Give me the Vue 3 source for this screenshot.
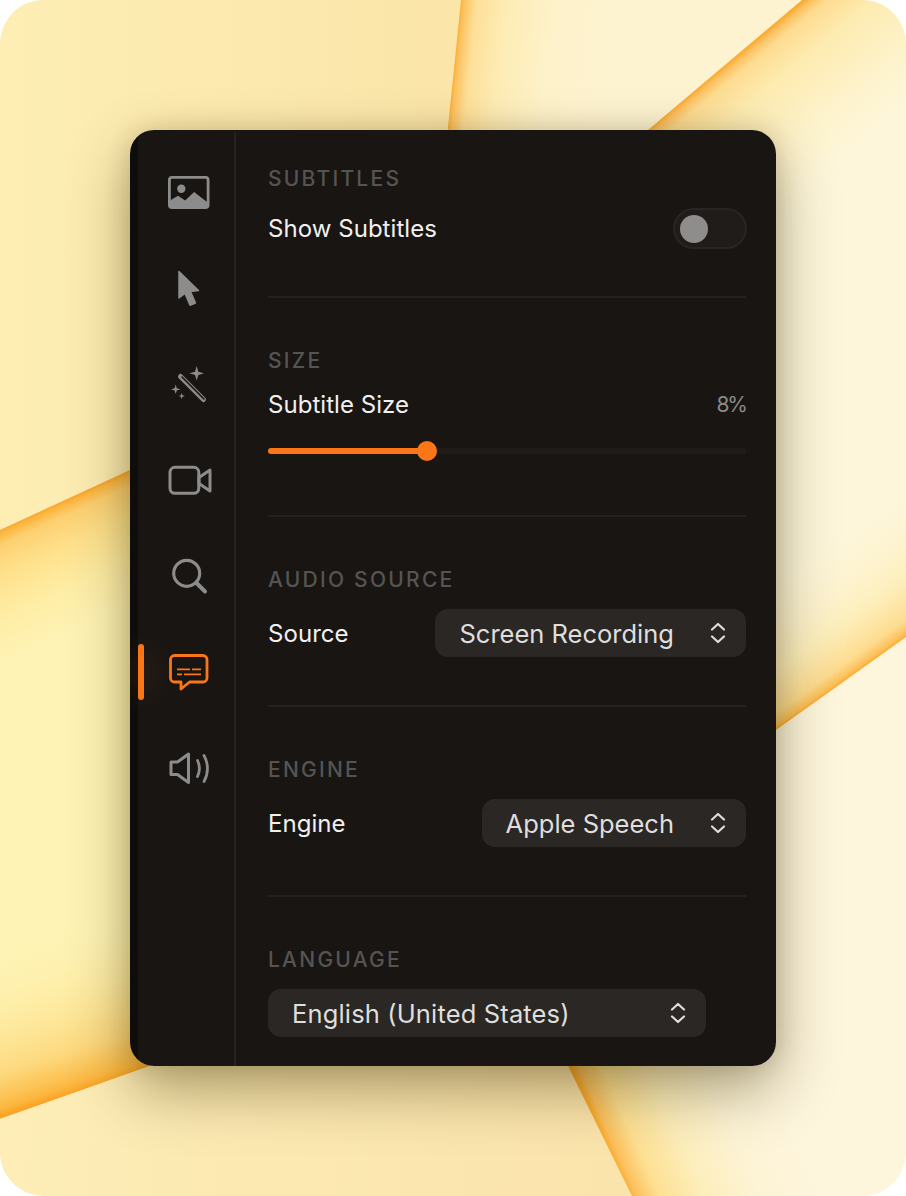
<script setup>
import { ref } from 'vue'

const showSubtitles = ref(false)
const subtitleSize = ref(8)
const sliderPercent = 33.2
</script>

<template>
  <div class="stage">
    <svg class="wallpaper" viewBox="0 0 906 1196" preserveAspectRatio="none">
      <defs>
        <linearGradient id="tl" gradientUnits="userSpaceOnUse" x1="0" y1="200" x2="460" y2="200">
          <stop offset="0" stop-color="#fdeeb4" />
          <stop offset="1" stop-color="#fbe5a8" />
        </linearGradient>
        <linearGradient id="e1" gradientUnits="userSpaceOnUse" x1="454" y1="64" x2="612" y2="80">
          <stop offset="0" stop-color="#fbaa2a" />
          <stop offset="0.02" stop-color="#fcc05a" />
          <stop offset="0.1" stop-color="#fddf98" />
          <stop offset="0.28" stop-color="#fdecb4" />
          <stop offset="0.6" stop-color="#fdf2ca" />
          <stop offset="1" stop-color="#fdf3d0" />
        </linearGradient>
        <linearGradient id="e2" gradientUnits="userSpaceOnUse" x1="726" y1="65" x2="820" y2="178">
          <stop offset="0" stop-color="#fbab30" />
          <stop offset="0.03" stop-color="#fcc060" />
          <stop offset="0.1" stop-color="#fddc90" />
          <stop offset="0.3" stop-color="#fdebb0" />
          <stop offset="0.7" stop-color="#fdf3cc" />
          <stop offset="1" stop-color="#fdf6da" />
        </linearGradient>
        <linearGradient id="e5" gradientUnits="userSpaceOnUse" x1="841" y1="684" x2="771" y2="586">
          <stop offset="0" stop-color="#fba92a" stop-opacity="1" />
          <stop offset="0.03" stop-color="#fcbf58" stop-opacity="1" />
          <stop offset="0.12" stop-color="#fddc90" stop-opacity="1" />
          <stop offset="0.4" stop-color="#fdeeb8" stop-opacity="0.9" />
          <stop offset="1" stop-color="#fdf3d0" stop-opacity="0" />
        </linearGradient>
        <linearGradient id="e3" gradientUnits="userSpaceOnUse" x1="65" y1="500" x2="115" y2="610">
          <stop offset="0" stop-color="#fba52a" />
          <stop offset="0.03" stop-color="#fcb640" />
          <stop offset="0.12" stop-color="#fdd070" />
          <stop offset="0.33" stop-color="#fee08a" />
          <stop offset="0.66" stop-color="#feeda4" />
          <stop offset="1" stop-color="#fef3b4" />
        </linearGradient>
        <linearGradient id="e4" gradientUnits="userSpaceOnUse" x1="75" y1="1092" x2="25" y2="940">
          <stop offset="0" stop-color="#fba425" stop-opacity="1" />
          <stop offset="0.05" stop-color="#fcb840" stop-opacity="1" />
          <stop offset="0.25" stop-color="#fdd678" stop-opacity="0.9" />
          <stop offset="0.6" stop-color="#fee89a" stop-opacity="0.6" />
          <stop offset="1" stop-color="#fef3b4" stop-opacity="0" />
        </linearGradient>
        <linearGradient id="bot" gradientUnits="userSpaceOnUse" x1="0" y1="1120" x2="620" y2="1180">
          <stop offset="0" stop-color="#fdedb6" />
          <stop offset="1" stop-color="#fbe3ac" />
        </linearGradient>
        <linearGradient id="e6" gradientUnits="userSpaceOnUse" x1="600" y1="1131" x2="760" y2="1060">
          <stop offset="0" stop-color="#fba828" />
          <stop offset="0.04" stop-color="#fcc05c" />
          <stop offset="0.16" stop-color="#fde092" />
          <stop offset="0.4" stop-color="#fdeebc" />
          <stop offset="0.7" stop-color="#fdf4d6" />
          <stop offset="1" stop-color="#fdf5dc" />
        </linearGradient>
      </defs>
      <rect width="906" height="1196" fill="#fdf5dc" />
      <polygon points="0,0 461,0 440,200 440,560 0,530" fill="url(#tl)" />
      <polygon points="461,0 802,0 560,204 440,204" fill="url(#e1)" />
      <polygon points="802,0 906,0 906,637 776,730 500,300 648,130" fill="url(#e2)" />
      <polygon points="906,637 776,730 640,560 906,300" fill="url(#e5)" />
      <polygon points="0,530 130,470 300,400 300,1066 150,1066 0,1119" fill="url(#e3)" />
      <polygon points="0,1119 150,1066 300,1000 300,800 0,800" fill="url(#e4)" />
      <polygon points="0,1119 150,1066 568,1066 632,1196 0,1196" fill="url(#bot)" />
      <polygon points="568,1066 800,1000 906,1196 632,1196" fill="url(#e6)" />
    </svg>

    <div class="panel">
      <nav class="sidebar">
        <button class="nav-btn">
          <svg class="nav-icon" viewBox="168 170 44 44">
            <path fill="#8c8c8c" fill-rule="evenodd" d="M172 176h33.500a4 4 0 0 1 4 4v25a4 4 0 0 1-4 4H172a4 4 0 0 1-4-4v-25a4 4 0 0 1 4-4zm0 2.800a1.200 1.200 0 0 0-1.200 1.200v20l7.200-4.200 7.200 4.600 8.900-8.400 12.600 9.800V180a1.200 1.200 0 0 0-1.200-1.200z" />
            <circle cx="181.300" cy="188.700" r="4.200" fill="#8c8c8c" />
          </svg>
        </button>
        <button class="nav-btn">
          <svg class="nav-icon" viewBox="168 266 44 44">
            <path fill="#8c8c8c" stroke="#8c8c8c" stroke-width="1.500" stroke-linejoin="round" d="M179 271.500 198.500 290.500 190.500 291.500 195.500 303 190 305.300 185 293.500 179 298z" />
          </svg>
        </button>
        <button class="nav-btn">
          <svg class="nav-icon" viewBox="168 362 44 44">
            <path d="M180.500 376.500 203.500 399.500" stroke="#8c8c8c" stroke-width="5" stroke-linecap="round" fill="none" />
            <path d="M182 377 204 399" stroke="#181513" stroke-width="1.600" stroke-linecap="round" fill="none" />
            <path fill="#8c8c8c" d="M196.700 366 198.300 371.700 204 373.300 198.300 375 196.700 380.600 195 375 189.400 373.300 195 371.700zM175.700 384.500 176.800 388.200 180.500 389.300 176.800 390.400 175.700 394 174.600 390.400 171 389.300 174.600 388.200zM181.700 392.800 182.500 395.200 184.900 396 182.500 396.800 181.700 399.200 180.900 396.800 178.500 396 180.900 395.200z" />
          </svg>
        </button>
        <button class="nav-btn">
          <svg class="nav-icon" viewBox="168 458 44 44" fill="none" stroke="#8c8c8c" stroke-width="3" stroke-linejoin="round">
            <rect x="170" y="467.300" width="28.800" height="26" rx="5" />
            <path d="M199 477.500 210 470v21l-11-7.500z" />
          </svg>
        </button>
        <button class="nav-btn">
          <svg class="nav-icon" viewBox="168 554 44 44" fill="none" stroke="#8c8c8c" stroke-linecap="round">
            <circle cx="186.700" cy="573.300" r="13" stroke-width="3.200" />
            <path d="M196.500 583 205 591.500" stroke-width="4" />
          </svg>
        </button>
        <button class="nav-btn active">
          <svg class="nav-icon" viewBox="168 650 44 44" fill="none" stroke="#fb7616" stroke-linejoin="round">
            <path stroke-width="2.800" d="M174.500 655.500h28.500a4 4 0 0 1 4 4v18.500a4 4 0 0 1-4 4h-13.500l-8.500 7v-7h-6.500a4 4 0 0 1-4-4v-18.500a4 4 0 0 1 4-4z" />
            <path stroke-width="1.800" d="M177 669.300h13M192 669.300h9M177 674.300h5M184 674.300h17" />
          </svg>
        </button>
        <button class="nav-btn">
          <svg class="nav-icon" viewBox="168 746 44 44" fill="none" stroke="#8c8c8c" stroke-width="2.800" stroke-linejoin="round" stroke-linecap="round">
            <path stroke-width="3" d="M171 762h6.500l11-8v28.500l-11-8H171z" />
            <path d="M197.500 760.500c2.400 5 2.400 11 0 16M204 755.500c4.600 8 4.600 18 0 26" />
          </svg>
        </button>
      </nav>

      <main class="content">
        <section class="group">
          <h2 class="group-title">SUBTITLES</h2>
          <div class="row">
            <span class="row-label">Show Subtitles</span>
            <button class="toggle" :class="{ on: showSubtitles }" @click="showSubtitles = !showSubtitles">
              <span class="knob"></span>
            </button>
          </div>
        </section>

        <section class="group">
          <h2 class="group-title">SIZE</h2>
          <div class="row row-tight">
            <span class="row-label">Subtitle Size</span>
            <span class="row-value">{{ subtitleSize }}%</span>
          </div>
          <div class="slider">
            <div class="slider-fill" :style="{ width: sliderPercent + '%' }"></div>
            <span class="slider-thumb" :style="{ left: sliderPercent + '%' }"></span>
          </div>
        </section>

        <section class="group">
          <h2 class="group-title">AUDIO SOURCE</h2>
          <div class="row">
            <span class="row-label">Source</span>
            <div class="select">
              <span>Screen Recording</span>
              <svg class="updown" viewBox="0 0 16 22" fill="none" stroke="currentColor" stroke-width="2.200" stroke-linecap="round" stroke-linejoin="round">
                <path d="M2 7.500 8 2l6 5.500M2 14.500 8 20l6-5.500" />
              </svg>
            </div>
          </div>
        </section>

        <section class="group">
          <h2 class="group-title">ENGINE</h2>
          <div class="row">
            <span class="row-label">Engine</span>
            <div class="select">
              <span>Apple Speech</span>
              <svg class="updown" viewBox="0 0 16 22" fill="none" stroke="currentColor" stroke-width="2.200" stroke-linecap="round" stroke-linejoin="round">
                <path d="M2 7.500 8 2l6 5.500M2 14.500 8 20l6-5.500" />
              </svg>
            </div>
          </div>
        </section>

        <section class="group last">
          <h2 class="group-title">LANGUAGE</h2>
          <div class="select select-wide">
            <span>English (United States)</span>
            <svg class="updown" viewBox="0 0 16 22" fill="none" stroke="currentColor" stroke-width="2.200" stroke-linecap="round" stroke-linejoin="round">
              <path d="M2 7.500 8 2l6 5.500M2 14.500 8 20l6-5.500" />
            </svg>
          </div>
        </section>
      </main>
    </div>
  </div>
</template>

<style>
html, body {
  margin: 0;
  background: #fff;
}
</style>

<style scoped>
.stage {
  position: relative;
  width: 906px;
  height: 1196px;
  box-sizing: border-box;
  padding: 130px;
  border-radius: 44px;
  overflow: hidden;
  font-family: Inter, "Liberation Sans", sans-serif;
}

.wallpaper {
  position: absolute;
  inset: 0;
  width: 100%;
  height: 100%;
}

.panel {
  position: relative;
  display: flex;
  height: 936px;
  border-radius: 24px;
  overflow: hidden;
  background: linear-gradient(90deg, #0f0d0c 8px, #181513 8px);
  box-shadow: 0 24px 60px rgba(60, 45, 0, 0.42), 0 0 24px rgba(60, 45, 0, 0.16);
}

.sidebar {
  width: 98px;
  flex-shrink: 0;
  display: flex;
  flex-direction: column;
  box-sizing: border-box;
  margin: 2px 0 0 8px;
  padding-top: 12px;
  border-right: 2px solid #252220;
}

.nav-btn {
  position: relative;
  display: flex;
  align-items: center;
  justify-content: center;
  height: 96px;
  padding: 0 0 0 8px;
  border: none;
  background: none;
}

.nav-icon {
  width: 44px;
  height: 44px;
}

.nav-btn.active::before {
  content: "";
  position: absolute;
  left: 0;
  top: 20px;
  width: 6px;
  height: 56px;
  border-radius: 3px;
  background: #fb7616;
}

.nav-btn.active::after {
  content: "";
  position: absolute;
  left: -30px;
  top: 8px;
  width: 66px;
  height: 80px;
  background: radial-gradient(closest-side, rgba(251, 118, 22, 0.06), transparent);
}

.content {
  flex: 1;
  min-width: 0;
  padding: 0 30px 0 32px;
}

.group {
  padding: 34px 0 47px;
  border-bottom: 2px solid #242220;
}

.group + .group {
  padding-top: 48px;
  padding-bottom: 48px;
}

.group.last {
  border-bottom: none;
}

.group-title {
  margin: 1px 0 15px;
  font-size: 21px;
  line-height: 28px;
  font-weight: 500;
  letter-spacing: 2.25px;
  color: #565452;
}

.row {
  display: flex;
  align-items: center;
  justify-content: space-between;
  min-height: 41px;
  font-size: 24px;
  color: #f1f0ef;
}

.row-tight {
  min-height: 28px;
  margin-top: 3px;
}

.row-label {
  font-weight: 400;
  letter-spacing: 0.05px;
}

.row-value {
  font-size: 21px;
  letter-spacing: -2px;
  color: #8a8988;
}

.toggle {
  display: flex;
  align-items: center;
  box-sizing: border-box;
  width: 74px;
  height: 41px;
  margin-right: -1px;
  padding: 0 0 0 5px;
  border: 2px solid #282523;
  border-radius: 21px;
  background: #1f1c1a;
}

.knob {
  width: 28px;
  height: 28px;
  border-radius: 50%;
  background: #8e8d8c;
}

.slider {
  position: relative;
  height: 6px;
  margin: 29px 0 13px;
  border-radius: 3px;
  background: #201c19;
}

.slider-fill {
  height: 100%;
  border-radius: 3px;
  background: #fb7616;
}

.slider-thumb {
  position: absolute;
  top: 50%;
  width: 20px;
  height: 20px;
  margin: -10px 0 0 -10px;
  border-radius: 50%;
  background: #fb7616;
}

.select {
  display: flex;
  align-items: center;
  gap: 36px;
  height: 48px;
  padding: 0 20px 0 24px;
  border-radius: 13px;
  background: #2a2725;
  font-size: 25.5px;
  color: #dfdedd;
}

.select-wide {
  width: 438px;
  box-sizing: border-box;
  justify-content: space-between;
  letter-spacing: 0.15px;
}

.updown {
  width: 16px;
  height: 22px;
  flex-shrink: 0;
}
</style>
